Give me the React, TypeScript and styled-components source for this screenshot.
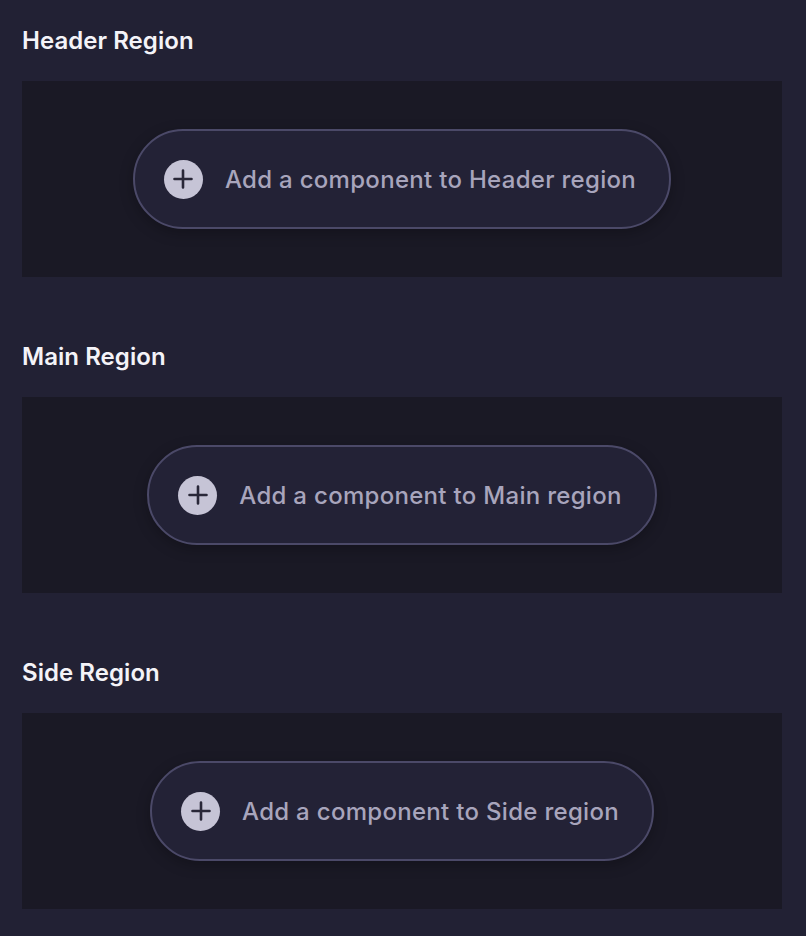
import React from "react";
import styled, { createGlobalStyle } from "styled-components";

const GlobalStyle = createGlobalStyle`
  html, body {
    margin: 0;
    padding: 0;
    background: #222134;
  }
  body {
    font-family: Inter, "Noto Sans", sans-serif;
  }
`;

const Page = styled.div`
  box-sizing: border-box;
  width: 806px;
  min-height: 936px;
  padding: 21px 24px 27px 22px;
  background: #222134;
  display: flex;
  flex-direction: column;
  gap: 60px;
`;

const Section = styled.section`
  display: flex;
  flex-direction: column;
  gap: 20px;
`;

const Heading = styled.h2`
  margin: 0;
  height: 40px;
  line-height: 40px;
  font-size: 24px;
  font-weight: 600;
  color: #f4f3f8;
  letter-spacing: 0.05px;
`;

const Panel = styled.div`
  height: 196px;
  background: #1a1925;
  display: flex;
  align-items: center;
  justify-content: center;
`;

const AddButton = styled.button`
  box-sizing: border-box;
  height: 100px;
  display: flex;
  align-items: center;
  gap: 22px;
  padding: 0 33px 0 29px;
  border: 2px solid #4b4968;
  border-radius: 50px;
  background: #232236;
  box-shadow: 0 4px 14px rgba(0, 0, 0, 0.25);
  font-family: Inter, "Noto Sans", sans-serif;
  font-size: 24px;
  font-weight: 500;
  letter-spacing: 0.3px;
  color: #a8a5bc;
  cursor: pointer;
`;

const PlusCircle = styled.span`
  width: 39px;
  height: 39px;
  border-radius: 50%;
  background: #c6c4d6;
  display: flex;
  align-items: center;
  justify-content: center;
  flex: none;
`;

const Label = styled.span`
  white-space: nowrap;
`;

const PlusIcon = () => (
  <svg width="20" height="20" viewBox="0 0 20 20" fill="none">
    <path d="M10 1.5v17M1.5 10h17" stroke="#292738" strokeWidth="2.6" strokeLinecap="round" />
  </svg>
);

const regions = [
  { title: "Header Region", name: "Header" },
  { title: "Main Region", name: "Main" },
  { title: "Side Region", name: "Side" },
];

export default function App() {
  return (
    <>
      <GlobalStyle />
      <Page>
        {regions.map((r) => (
          <Section key={r.name}>
            <Heading>{r.title}</Heading>
            <Panel>
              <AddButton>
                <PlusCircle>
                  <PlusIcon />
                </PlusCircle>
                <Label>Add a component to {r.name} region</Label>
              </AddButton>
            </Panel>
          </Section>
        ))}
      </Page>
    </>
  );
}
